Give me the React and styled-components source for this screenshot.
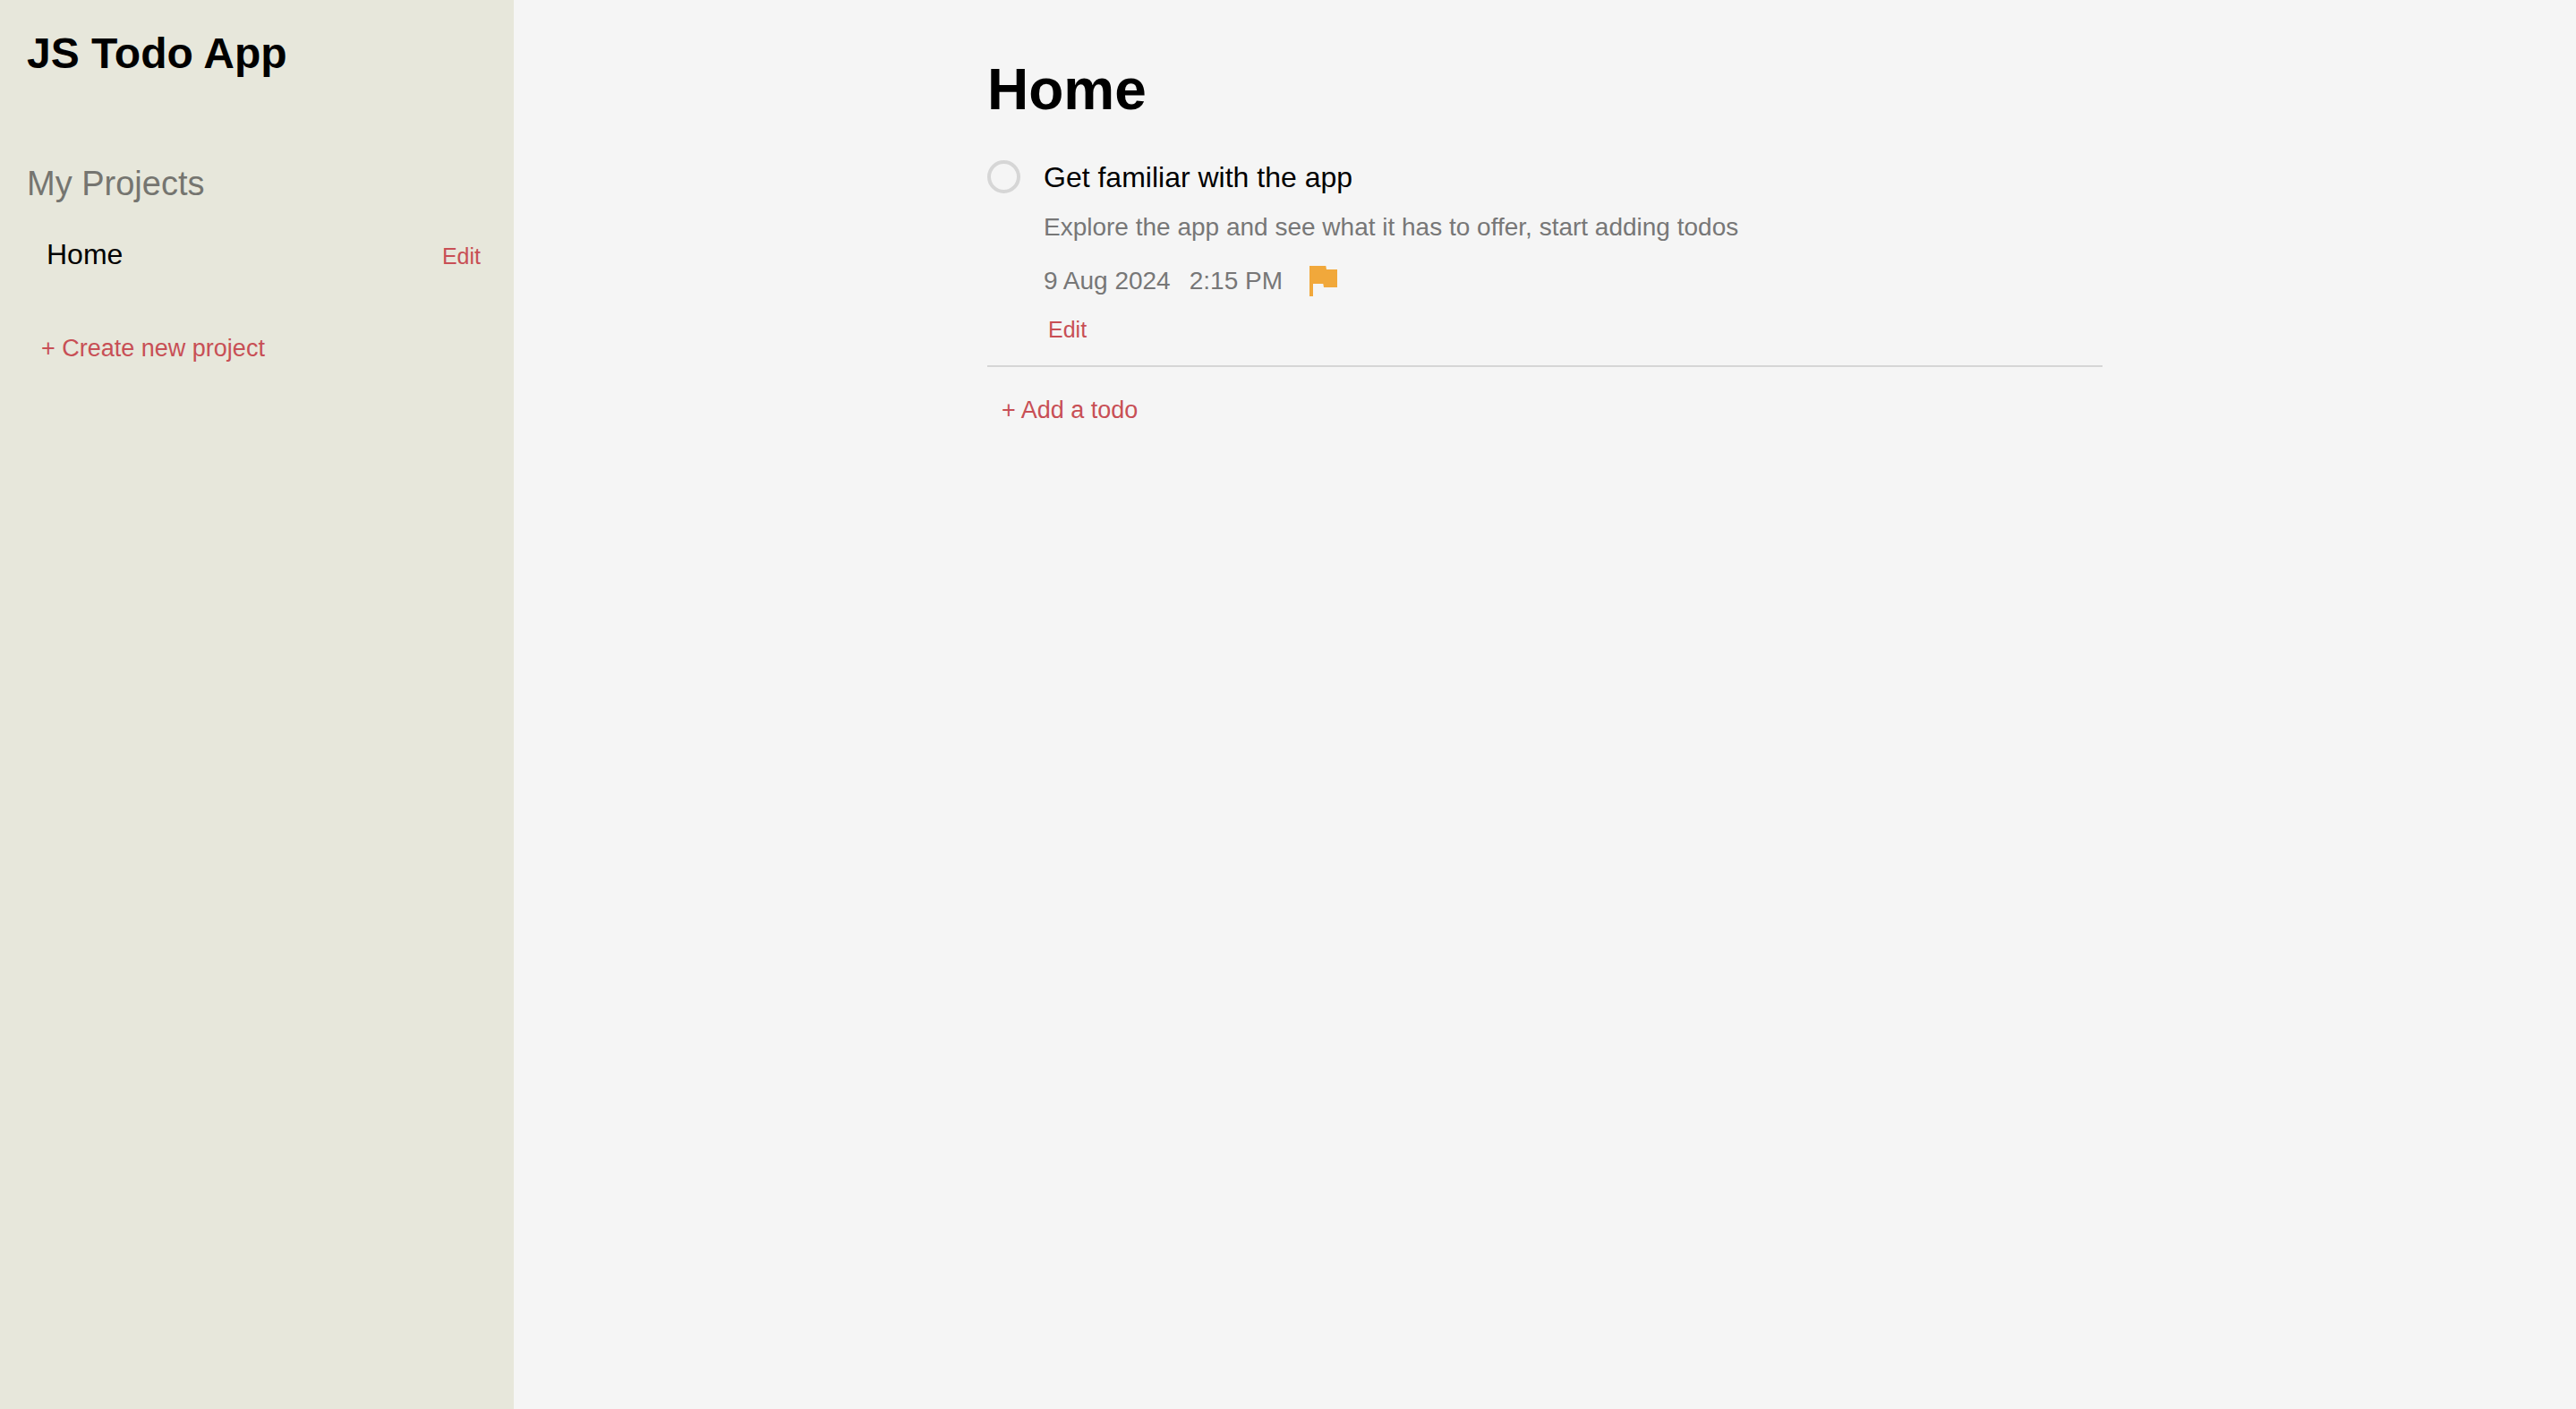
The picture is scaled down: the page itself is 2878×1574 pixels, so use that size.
import React, { useState } from "react";
import styled, { createGlobalStyle } from "styled-components";

const GlobalStyle = createGlobalStyle`
  *, *::before, *::after { box-sizing: border-box; }
  body {
    margin: 0;
    background: #f5f5f5;
    color: #000;
    font-family: "Liberation Sans", Arial, Helvetica, sans-serif;
  }
  h1, h2, p, ul { margin: 0; padding: 0; }
  ul { list-style: none; }
`;

const Page = styled.div`
  display: grid;
  grid-template-columns: 574px minmax(0, 1fr);
  min-height: 100vh;
`;

const Sidebar = styled.aside`
  display: flex;
  flex-direction: column;
  align-items: stretch;
  padding: 32px 30px;
  background: #e7e7db;
`;

const Brand = styled.p`
  font-size: 48px;
  line-height: 56px;
  font-weight: 700;
`;

const SectionTitle = styled.h2`
  margin-top: 95px;
  color: #757570;
  font-size: 38px;
  line-height: 44px;
  font-weight: 400;
`;

const ProjectList = styled.ul`
  margin: 39px 0 71px;
`;

const ProjectRow = styled.li`
  display: flex;
  align-items: baseline;
  justify-content: space-between;
  padding: 0 2px 0 22px;
`;

const ProjectLink = styled.a`
  color: inherit;
  font-size: 32px;
  line-height: 36px;
  text-decoration: none;
`;

const TextButton = styled.button`
  padding: ${(p) => (p.$small ? "0 5px" : "0 16px")};
  border: 0;
  background: none;
  color: #c84f55;
  font-family: inherit;
  font-size: ${(p) => (p.$small ? "25px" : "27px")};
  line-height: 32px;
  text-align: left;
  cursor: pointer;
`;

const Main = styled.main`
  display: flex;
  justify-content: center;
  padding: 64px 32px;
`;

const Content = styled.div`
  width: 100%;
  max-width: 1246px;
`;

const Heading = styled.h1`
  font-size: 64px;
  line-height: 72px;
`;

const TodoList = styled.ul`
  margin: 43px 0 32px;
`;

const TodoItem = styled.li`
  display: flex;
  align-items: flex-start;
  gap: 26px;
  padding-bottom: 24px;
  border-bottom: 2px solid #d6d6d6;
`;

const Tick = styled.input`
  appearance: none;
  flex: none;
  width: 37px;
  height: 37px;
  margin: 0;
  border: 4px solid #d6d6d6;
  border-radius: 50%;
  cursor: pointer;

  &:checked { background: #d6d6d6; }
`;

const TodoBody = styled.div`
  display: flex;
  flex-direction: column;
  align-items: flex-start;
  min-width: 0;
`;

const TodoTitle = styled.label`
  font-size: 32px;
  line-height: 38px;
`;

const Description = styled.p`
  margin-top: 20px;
  color: #777;
  font-size: 28px;
  line-height: 34px;
`;

const Meta = styled.div`
  display: flex;
  align-items: center;
  gap: 21px;
  margin: 26px 0 21px;
  color: #777;
  font-size: 28px;
  line-height: 34px;
`;

const Flag = styled.svg`
  display: block;
  width: 31px;
  height: 34px;
  margin-left: 9px;
  fill: #f1a83b;
`;

const projects = ["Home"];

const todos = [
  {
    id: "familiar",
    title: "Get familiar with the app",
    description: "Explore the app and see what it has to offer, start adding todos",
    date: "9 Aug 2024",
    time: "2:15 PM",
  },
];

function Todo({ todo }) {
  const [done, setDone] = useState(false);
  return (
    <TodoItem>
      <Tick
        id={todo.id}
        type="checkbox"
        checked={done}
        onChange={(e) => setDone(e.target.checked)}
      />
      <TodoBody>
        <TodoTitle htmlFor={todo.id}>{todo.title}</TodoTitle>
        <Description>{todo.description}</Description>
        <Meta>
          <time>{todo.date}</time>
          <time>{todo.time}</time>
          <Flag viewBox="0 0 31 34" aria-hidden="true">
            <path d="M0 0H18.3L19 4H31V24H16L15.3 20H4V34H0Z" />
          </Flag>
        </Meta>
        <TextButton type="button" $small>Edit</TextButton>
      </TodoBody>
    </TodoItem>
  );
}

export default function App() {
  return (
    <>
      <GlobalStyle />
      <Page>
        <Sidebar>
          <Brand>JS Todo App</Brand>
          <SectionTitle>My Projects</SectionTitle>
          <ProjectList>
            {projects.map((name) => (
              <ProjectRow key={name}>
                <ProjectLink href="#home">{name}</ProjectLink>
                <TextButton type="button" $small>Edit</TextButton>
              </ProjectRow>
            ))}
          </ProjectList>
          <TextButton type="button">+ Create new project</TextButton>
        </Sidebar>
        <Main>
          <Content>
            <Heading>Home</Heading>
            <TodoList>
              {todos.map((todo) => (
                <Todo key={todo.id} todo={todo} />
              ))}
            </TodoList>
            <TextButton type="button">+ Add a todo</TextButton>
          </Content>
        </Main>
      </Page>
    </>
  );
}
